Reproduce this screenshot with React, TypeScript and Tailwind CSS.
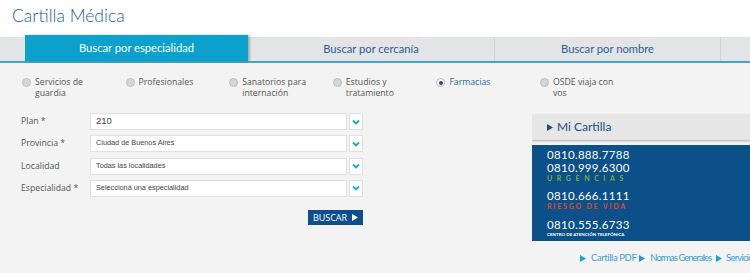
import React from 'react'

const radios = [
  { label: ['Servicios de', 'guardia'], checked: false },
  { label: ['Profesionales'], checked: false },
  { label: ['Sanatorios para', 'internación'], checked: false },
  { label: ['Estudios y', 'tratamiento'], checked: false },
  { label: ['Farmacias'], checked: true },
  { label: ['OSDE viaja con', 'vos'], checked: false },
]

const fields = [
  { label: 'Plan *', value: '210', big: true },
  { label: 'Provincia *', value: 'Ciudad de Buenos Aires' },
  { label: 'Localidad', value: 'Todas las localidades' },
  { label: 'Especialidad *', value: 'Seleccioná una especialidad' },
]

const Chevron = () => (
  <svg width="8" height="6" viewBox="0 0 8 6">
    <path d="M1 1.5 L4 4.5 L7 1.5" fill="none" stroke="#1aa6d4" strokeWidth="1.8" />
  </svg>
)

const Tri = ({ color = '#1a9fd0' }: { color?: string }) => (
  <svg width="6" height="7" viewBox="0 0 6 7" className="inline-block shrink-0">
    <path d="M0 0 L6 3.5 L0 7 Z" fill={color} />
  </svg>
)

export default function App() {
  return (
    <div className="w-[750px] h-[273px] overflow-hidden bg-[#f3f3f3] font-['Lato',sans-serif]">
      {/* header */}
      <div className="h-[35px] bg-white pl-[12px] pt-[5px]">
        <h1 className="text-[17.5px] leading-[22px] font-light text-[#245d8e]">Cartilla Médica</h1>
      </div>

      {/* tabs */}
      <div className="bg-white">
        <div className="flex items-end h-[26px]">
          <div className="w-[25px] h-[24px] bg-[#e3e4e6]"></div>
          <div className="w-[223px] h-[26px] bg-[#0ba1cc] flex items-center justify-center text-white text-[11.2px] shadow-[2px_0_2px_rgba(0,0,0,0.25)] z-10">
            Buscar por especialidad
          </div>
          <div className="w-[247px] h-[24px] bg-[#e3e4e6] border-r border-[#d2d3d5] flex items-center justify-center text-[#2d5f8f] text-[11.2px]">
            Buscar por cercanía
          </div>
          <div className="w-[226px] h-[24px] bg-[#e3e4e6] border-r border-[#d2d3d5] flex items-center justify-center text-[#2d5f8f] text-[11.2px]">
            Buscar por nombre
          </div>
          <div className="flex-1 h-[24px] bg-[#e3e4e6]"></div>
        </div>
        <div className="h-[2px] bg-[#3aa6d0]"></div>
      </div>

      {/* radios */}
      <div className="flex pl-[22px] pt-[14px] h-[50px] font-['Open_Sans',sans-serif]">
        {radios.map((r, i) => (
          <div key={i} className="w-[103.6px] flex items-start gap-[4px]">
            <span
              className={
                'mt-[1px] w-[9px] h-[9px] rounded-full border flex items-center justify-center shrink-0 ' +
                (r.checked ? 'border-[#b8b8b8] bg-white' : 'border-[#bdbdbd] bg-[#d6d6d6]')
              }
            >
              {r.checked && <span className="w-[4px] h-[4px] rounded-full bg-[#174f86]"></span>}
            </span>
            <div className={'text-[8.7px] leading-[10.5px] ' + (r.checked ? 'text-[#2d6a9c]' : 'text-[#555]')}>
              {r.label.map((l, j) => (
                <div key={j}>{l}</div>
              ))}
            </div>
          </div>
        ))}
      </div>

      {/* body */}
      <div className="flex">
        <div className="w-[532px] shrink-0 pl-[21px]">
          <div className="flex flex-col gap-[5.3px] w-[342px]">
            {fields.map((f, i) => (
              <div key={i} className="flex items-center h-[17px]">
                <div className="w-[69px] text-[8.7px] text-[#555] font-['Open_Sans',sans-serif]">{f.label}</div>
                <div className="w-[257px] h-[17px] bg-white border border-[#e0e0e0] flex items-center pl-[5px] text-[#444] font-['Liberation_Sans',sans-serif]">
                  <span className={f.big ? 'text-[9.5px]' : 'text-[7.3px]'}>{f.value}</span>
                </div>
                <div className="ml-[2px] w-[14px] h-[17px] bg-white border border-[#e0e0e0] flex items-center justify-center">
                  <Chevron />
                </div>
              </div>
            ))}
          </div>
          <div className="w-[342px] flex justify-end mt-[13px]">
            <button className="w-[55px] h-[15px] bg-[#0c4e8e] text-white text-[9px] font-['Open_Sans',sans-serif] flex items-center justify-center gap-[5px]">
              BUSCAR <Tri color="#ffffff" />
            </button>
          </div>
        </div>

        <div className="w-[218px] shrink-0 overflow-hidden pt-[1px]">
          <div className="h-[26px] bg-[#e6e6e6] shadow-[0_1px_2px_rgba(0,0,0,0.3)] flex items-center pl-[15px] gap-[4px] text-[#1e4f80] text-[12px]">
            <Tri color="#1e4f80" /> Mi Cartilla
          </div>
          <div className="mt-[5px] h-[96px] bg-[#0b5089] pl-[15px] pt-[3px] text-white">
            <div className="text-[11.5px] leading-[13px] tracking-[0.3px]">0810.888.7788</div>
            <div className="text-[11.5px] leading-[13px] tracking-[0.3px]">0810.999.6300</div>
            <div className="text-[7px] leading-[8px] font-bold tracking-[4.6px] text-[#7cb32b]">URGENCIAS</div>
            <div className="mt-[7px] text-[11.5px] leading-[13px] tracking-[0.3px]">0810.666.1111</div>
            <div className="text-[7px] leading-[9px] font-bold tracking-[1.8px] text-[#e0462a]">RIESGO DE VIDA</div>
            <div className="mt-[7px] text-[11.5px] leading-[13px] tracking-[0.3px]">0810.555.6733</div>
            <div className="text-[4.5px] leading-[7px] font-bold">CENTRO DE ATENCIÓN TELEFÓNICA</div>
          </div>
          <div className="mt-[10px] pl-[48px] flex items-center whitespace-nowrap text-[9.5px] text-[#3aa0cf]">
            <Tri /> <span className="ml-[5px] mr-[3px] tracking-[-0.4px]">Cartilla PDF</span>
            <Tri /> <span className="ml-[5px] mr-[5px] tracking-[-1px]">Normas Generales</span>
            <Tri /> <span className="ml-[4px] tracking-[-0.8px]">Servicios</span>
          </div>
        </div>
      </div>
    </div>
  )
}
